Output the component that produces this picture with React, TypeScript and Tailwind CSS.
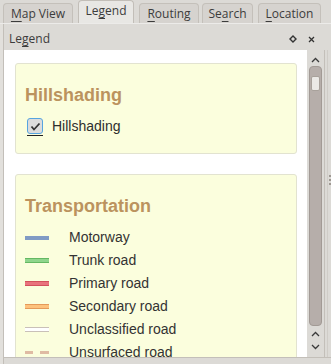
import React from "react";

type Road = {
  name: string;
  swatch: React.ReactNode;
};

const roads: Road[] = [
  { name: "Motorway", swatch: <div className="w-[24px] h-[4px] bg-[#809bc4]" /> },
  {
    name: "Trunk road",
    swatch: <div className="w-[24px] h-[5px] bg-[#8fd58c] border-y border-[#64b863]" />,
  },
  {
    name: "Primary road",
    swatch: <div className="w-[24px] h-[5px] bg-[#e8737c] border-y border-[#d3505c]" />,
  },
  {
    name: "Secondary road",
    swatch: <div className="w-[24px] h-[5px] bg-[#fdc27d] border-y border-[#e49a5a]" />,
  },
  {
    name: "Unclassified road",
    swatch: <div className="w-[24px] h-[5px] bg-white border-y border-[#c9c0b8]" />,
  },
  {
    name: "Unsurfaced road",
    swatch: (
      <div className="w-[24px] h-[3px] flex justify-between">
        <div className="w-[8px] h-full bg-[#dfbba3]" />
        <div className="w-[9px] h-full bg-[#dfbba3]" />
      </div>
    ),
  },
];

const tabs = [
  { pre: "", key: "M", post: "ap View", w: "w-[70px]", ml: "ml-[3px]" },
  { pre: "Le", key: "g", post: "end", w: "w-[56px]", ml: "ml-[5px]", active: true },
  { pre: "", key: "R", post: "outing", w: "w-[60px]", ml: "ml-[5px]" },
  { pre: "Se", key: "a", post: "rch", w: "w-[51px]", ml: "ml-[3px]" },
  { pre: "", key: "L", post: "ocation", w: "w-[63px]", ml: "ml-[5px]" },
];

function Chevron({ down = false }: { down?: boolean }) {
  return (
    <svg width="9" height="6" viewBox="0 0 9 6" className="block">
      <path
        d={down ? "M1 1 L4.5 4.5 L8 1" : "M1 5 L4.5 1.5 L8 5"}
        fill="none"
        stroke="#3a3a3a"
        strokeWidth="1.3"
      />
    </svg>
  );
}

export default function App() {
  return (
    <div className="w-[331px] h-[364px] bg-[#dcdad6] overflow-hidden flex flex-col font-['Open_Sans',sans-serif] text-[12px] text-[#3c3c3c]">
      {/* tab bar */}
      <div className="h-[24px] flex items-end border-b border-[#ecebe9] shrink-0">
        {tabs.map((t) => (
          <div
            key={t.post}
            className={`${t.w} ${t.ml} flex items-center justify-center rounded-t-[4px] border border-b-0 ${
              t.active
                ? "h-[23px] bg-[#e8e7e4] border-[#c2beb8] pb-[2px]"
                : "h-[20px] bg-[#d6d3cf] border-[#c4c0ba]"
            }`}
          >
            <span className="leading-none">
              {t.pre}
              <span className="underline underline-offset-[3px]">{t.key}</span>
              {t.post}
            </span>
          </div>
        ))}
      </div>

      {/* dock */}
      <div className="flex-1 flex min-h-0">
        <div className="w-[3px] bg-[#e2e0dc] shrink-0" />
        <div className="flex-1 flex flex-col border-l border-[#c3bfb9] min-h-0">
          <div className="h-[26px] shrink-0 flex items-center pl-[5px] pr-[16px] pt-[4px]">
            <span className="flex-1 leading-none">
              Le<span className="underline underline-offset-[3px]">g</span>end
            </span>
            <svg width="8" height="8" viewBox="0 0 8 8" className="mr-[11px]">
              <path d="M4 1 L7 4 L4 7 L1 4 Z" fill="none" stroke="#333" strokeWidth="1.4" />
            </svg>
            <svg width="7" height="7" viewBox="0 0 7 7">
              <path d="M1 1 L6 6 M6 1 L1 6" stroke="#333" strokeWidth="1.3" />
            </svg>
          </div>

          <div className="flex-1 flex min-h-0">
            {/* content */}
            <div className="w-[303px] bg-white overflow-hidden shrink-0 pl-[11px] pr-[10px] pt-[13px] font-['Liberation_Sans',Arial,sans-serif]">
              <div className="bg-[#fbfedd] border border-[#e2e3d0] rounded-[3px] h-[91px] pl-[9px] pt-[21px]">
                <div className="text-[18px] leading-[21px] font-bold text-[#bb935e]">Hillshading</div>
                <div className="flex items-center mt-[12px]">
                  <div className="flex flex-col ml-[2px]">
                    <div className="w-[16px] h-[16px] rounded-[3px] border-[1.5px] border-[#57a4e0] bg-[#dcdcdc] flex items-center justify-center">
                      <svg width="11" height="9" viewBox="0 0 11 9">
                        <path d="M1.5 4.5 L4 7.5 L9.5 1.5" fill="none" stroke="#333" strokeWidth="1.8" />
                      </svg>
                    </div>
                    <div className="h-[1px] w-[16px] bg-[#222] mt-[1px]" />
                  </div>
                  <span className="ml-[9px] text-[14px] leading-[17px] text-[#2e2e2e] -mt-[2px]">Hillshading</span>
                </div>
              </div>

              <div className="mt-[20px] bg-[#fbfedd] border border-[#e2e3d0] rounded-[3px] h-[220px] pl-[9px] pt-[21px]">
                <div className="text-[18px] leading-[21px] font-bold text-[#bb935e]">Transportation</div>
                <div className="mt-[9px] flex flex-col">
                  {roads.map((r) => (
                    <div key={r.name} className="h-[23px] flex items-center">
                      <div className="w-[44px] flex items-center">{r.swatch}</div>
                      <span className="text-[14px] leading-[17px] text-[#333]">{r.name}</span>
                    </div>
                  ))}
                </div>
              </div>
            </div>

            {/* scrollbar */}
            <div className="w-[17px] shrink-0 flex flex-col items-center pt-[7px] pb-[7px]">
              <Chevron />
              <div className="mt-[3px] w-[13px] flex-1 rounded-[4px] bg-[#b6aeaa] border border-[#a29a95] flex flex-col items-center pt-[9px]">
                <div className="w-[9px] h-[15px] rounded-[2px] bg-[#ebe9e6] border border-[#a8a19b]" />
              </div>
              <div className="mt-[5px] flex flex-col items-center gap-[7px]">
                <Chevron />
                <Chevron down />
              </div>
            </div>

            {/* splitter */}
            <div className="flex-1 border-l border-[#c3bfb9] flex justify-end">
              <div className="w-[4px] border-l border-[#cfccc7] flex flex-col items-center pt-[125px] gap-[2px]">
                <div className="w-[2px] h-[2px] bg-[#9e9892]" />
                <div className="w-[2px] h-[2px] bg-[#9e9892]" />
                <div className="w-[2px] h-[2px] bg-[#9e9892]" />
              </div>
            </div>
          </div>

          <div className="h-[7px] shrink-0 border-t border-[#c3bfb9]" />
        </div>
      </div>
    </div>
  );
}
